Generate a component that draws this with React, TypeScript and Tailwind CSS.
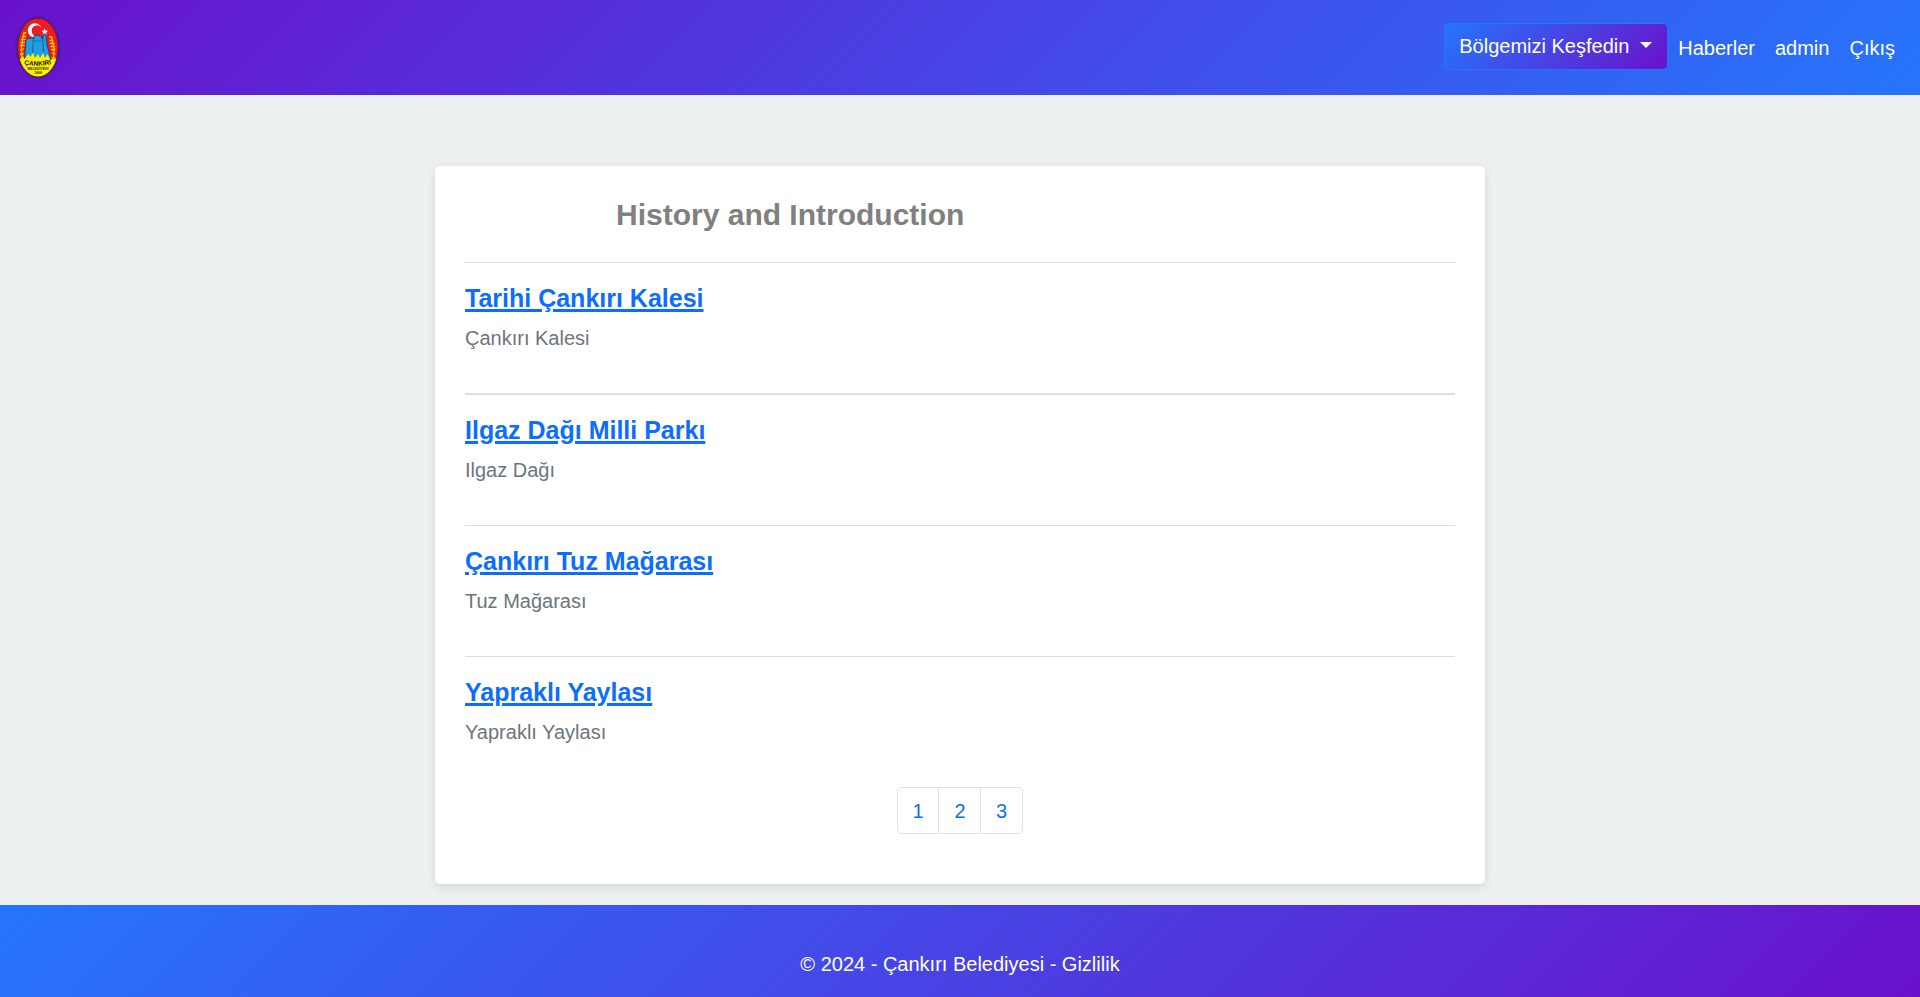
import React from "react";

const places = [
  { title: "Tarihi Çankırı Kalesi", text: "Çankırı Kalesi", box: "h-[131px] border-t" },
  { title: "Ilgaz Dağı Milli Parkı", text: "Ilgaz Dağı", box: "h-[132px] border-t-2" },
  { title: "Çankırı Tuz Mağarası", text: "Tuz Mağarası", box: "h-[131px] border-t" },
  { title: "Yapraklı Yaylası", text: "Yapraklı Yaylası", box: "h-[131px] border-t" },
];

function Wheat({ flip }: { flip?: boolean }) {
  return (
    <g transform={flip ? "translate(45.5 4) scale(-1 1)" : undefined}>
      <path d="M7 42 L6.5 30 L9 17" fill="none" stroke="#ffd800" strokeWidth="1.2" />
      <path
        d="M8 17.5 l3.4 -1 M7 20.5 l4 0 M5.8 23.5 l5 0 M5.2 26.5 l5 0 M5 29.5 l4.6 0 M5 34 l3.8 -1 M5 38.5 l3.8 -1"
        stroke="#ffc400"
        strokeWidth="1.6"
      />
    </g>
  );
}

function Crest() {
  return (
    <svg width="46" height="64" viewBox="0 0 46 64" className="block" aria-label="Çankırı Belediyesi">
      <defs>
        <clipPath id="crest">
          <ellipse cx="23" cy="31.5" rx="20" ry="29" />
        </clipPath>
      </defs>
      <ellipse cx="23" cy="31.5" rx="22.2" ry="31" fill="#6415c4" stroke="#42208a" strokeWidth="0.8" />
      <ellipse cx="23" cy="31.5" rx="20.4" ry="29.4" fill="#f11a20" stroke="#35204a" strokeWidth="0.9" />
      <g clipPath="url(#crest)">
        <Wheat />
        <Wheat flip />
        <circle cx="20" cy="14.5" r="7.2" fill="#fff" />
        <circle cx="22.2" cy="14.8" r="5.6" fill="#f11a20" />
        <path d="M29.7 12.3l.9 2.3 2.4.2-1.8 1.6.6 2.4-2.1-1.3-2.1 1.3.6-2.4-1.8-1.6 2.4-.2z" fill="#fff" />
        <path
          d="M9.5 45 L11 24 L12.5 22.5 L17 22 L18.3 23 L19 20 L22 19 L26.5 20.5 L27 23 L28 22.5 L28.4 18 L31 18 L32 28 L36 45 Z"
          fill="#1e9fe0"
          stroke="#123d66"
          strokeWidth="0.8"
        />
        <path d="M18.3 23 L17.5 38 M27.6 22 L28.6 36" stroke="#124f80" strokeWidth="0.7" />
        <path d="M18.3 24 L22.5 25.5 L27 24" fill="none" stroke="#124f80" strokeWidth="0.5" />
        <path
          d="M0 45 L5 43 L8 40 L9.5 43 L13.5 38 L15.5 41 L18 36.5 L20 42 L23 38 L25 42 L28 37 L30 42 L32.5 38 L35.5 44 L39 42 L46 46 V64 H0 Z"
          fill="#fff000"
        />
      </g>
      <path id="crestArc" d="M9 48.5 Q23 51.5 37.5 47.8" fill="none" />
      <text
        fill="#17130a"
        fontFamily="Liberation Sans, sans-serif"
        fontWeight="700"
        fontSize="6.6"
        textLength="27.5"
      >
        <textPath href="#crestArc">ÇANKIRI</textPath>
      </text>
      <text x="23" y="54" textAnchor="middle" fill="#39350a" fontFamily="Liberation Sans, sans-serif" fontWeight="700" fontSize="3.7" textLength="21">
        BELEDİYESİ
      </text>
      <text x="23" y="57.8" textAnchor="middle" fill="#39350a" fontFamily="Liberation Sans, sans-serif" fontWeight="700" fontSize="3.6">
        1868
      </text>
    </svg>
  );
}

export default function App() {
  return (
    <div className="flex h-[997px] flex-col overflow-hidden bg-[#ecf0f1] font-['Liberation_Sans',Arial,sans-serif] text-[20px] leading-[30px]">
      <header className="flex h-[95px] shrink-0 items-start justify-between bg-[linear-gradient(135deg,#6a11cb_0%,#2575fc_100%)] px-[15px] text-white">
        <a href="#" className="mt-[16px] block">
          <Crest />
        </a>
        <nav className="flex">
          <button className="mt-[23px] flex h-[47px] w-[224px] items-start rounded-[5px] border border-[#2575fc] bg-[linear-gradient(135deg,#2575fc_0%,#6a11cb_100%)] pt-[7px] pl-[14px]">
            <span>Bölgemizi Keşfedin</span>
            <svg width="12" height="6" viewBox="0 0 12 6" className="mt-[11px] ml-[11px]" fill="currentColor">
              <path d="M0 0h12L6 6z" />
            </svg>
          </button>
          <a href="#" className="mt-[33px] px-[10px]">Haberler</a>
          <a href="#" className="mt-[33px] px-[10px]">admin</a>
          <a href="#" className="mt-[33px] px-[10px]">Çıkış</a>
        </nav>
      </header>

      <main className="mx-auto mt-[71px] h-[718px] w-[1050px] shrink-0 rounded-[5px] bg-white px-[30px] shadow-[0_3px_10px_rgba(0,0,0,0.1)]">
        <h1 className="h-[96px] pt-[31px] pl-[151px] text-[30px] leading-[36px] font-bold text-[#808080]">
          History and Introduction
        </h1>
        {places.map((p) => (
          <article key={p.title} className={`border-[#dddddd] ${p.box}`}>
            <h2 className="pt-[20px] text-[25px] leading-[30px] font-bold">
              <a href="#" className="text-[#0d6efd] underline decoration-[3px]">{p.title}</a>
            </h2>
            <p className="mt-[10px] text-[#6c757d]">{p.text}</p>
          </article>
        ))}
        <nav className="flex justify-center">
          <div className="flex h-[47px] w-[126px] divide-x divide-[#dee2e6] rounded-[5px] border border-[#dee2e6] text-center text-[#0d6efd]">
            <a href="#" className="w-[41px] pt-[8px]">1</a>
            <a href="#" className="w-[42px] pt-[8px] pl-px">2</a>
            <a href="#" className="w-[41px] pt-[8px]">3</a>
          </div>
        </nav>
      </main>

      <footer className="mt-[21px] h-[92px] shrink-0 bg-[linear-gradient(135deg,#2575fc_0%,#6a11cb_100%)] pt-[44px] text-center text-white">
        © 2024 - Çankırı Belediyesi - <a href="#">Gizlilik</a>
      </footer>
    </div>
  );
}
